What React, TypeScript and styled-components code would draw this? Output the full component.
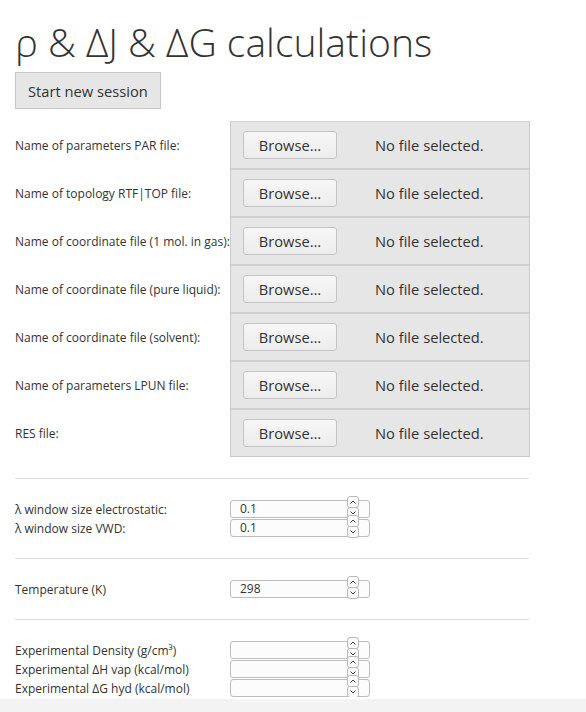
import React from "react";
import styled, { createGlobalStyle } from "styled-components";

const Global = createGlobalStyle`
  html, body { margin: 0; padding: 0; background: #fff; }
  body { font-family: "Open Sans", "Noto Sans", sans-serif; color: #333; }
  * { box-sizing: border-box; }
`;

const Page = styled.div`
  padding: 0 15px;
  width: 544px;
`;

const Title = styled.h1`
  margin: 0;
  padding-top: 17px;
  font-family: "Open Sans Light", "Open Sans", sans-serif;
  font-weight: 300;
  font-size: 39.1px;
  line-height: 50px;
  color: #333;
`;

const SessionButton = styled.button`
  display: block;
  margin-top: 5px;
  height: 37px;
  padding: 0 12px;
  background: #e6e6e6;
  border: 1px solid #c8c8c8;
  border-radius: 0;
  font-family: inherit;
  font-size: 14.7px;
  color: #333;
`;

const FileGrid = styled.div`
  margin-top: 12px;
  display: grid;
  grid-template-columns: 215px 300px;
`;

const FileLabel = styled.div`
  height: 48px;
  display: flex;
  align-items: center;
  font-size: 12px;
  white-space: nowrap;
`;

const FileCell = styled.div<{ $first?: boolean; $last?: boolean }>`
  height: 48px;
  background: #e6e6e6;
  border-left: 1px solid #cbcbcb;
  border-right: 1px solid #cbcbcb;
  border-top: 1px solid ${(p) => (p.$first ? "#d6d6d6" : "#cfcfcf")};
  border-bottom: 1px solid ${(p) => (p.$last ? "#c8c8c8" : "#cfcfcf")};
  display: flex;
  align-items: center;
  padding-left: 12px;
  font-size: 15px;
`;

const BrowseButton = styled.span`
  width: 94px;
  height: 28px;
  display: flex;
  align-items: center;
  justify-content: center;
  border: 1px solid #c4c4c4;
  border-radius: 3px;
  background: linear-gradient(#f7f7f7, #ececec);
  color: #333;
  font-size: 14.7px;
`;

const NoFile = styled.span`
  margin-left: 38px;
  color: #333;
  font-size: 14.7px;
`;

const Rule = styled.hr`
  border: 0;
  border-top: 1px solid #dcdcdc;
  margin: 21px 0 21px;
  width: 514px;
`;

const NumGrid = styled.div`
  display: grid;
  grid-template-columns: 215px 140px;
  row-gap: 1px;
`;

const NumLabel = styled.div`
  height: 18px;
  display: flex;
  align-items: center;
  font-size: 12px;
  white-space: nowrap;
`;

const InputWrap = styled.div`
  position: relative;
  width: 140px;
  height: 18px;
`;

const NumBox = styled.div`
  height: 18px;
  border: 1px solid #bdbdbd;
  border-radius: 3px;
  background: #fcfcfc;
  padding-left: 9px;
  font-size: 12px;
  line-height: 16px;
  color: #333;
`;

const Spinner = styled.div`
  position: absolute;
  right: 11px;
  top: -4px;
  width: 12px;
  display: flex;
  flex-direction: column;
`;

const SpinBtn = styled.div`
  height: 12px;
  border: 1px solid #b8b8b8;
  border-radius: 3px;
  background: #fafafa;
  display: flex;
  align-items: center;
  justify-content: center;
  margin-bottom: -1px;
`;

const Footer = styled.div`
  position: fixed;
  left: 0;
  right: 0;
  bottom: 0;
  height: 13px;
  background: #f3f3f3;
`;

const Chevron = ({ up }: { up?: boolean }) => (
  <svg width="6" height="4" viewBox="0 0 6 4">
    <polyline
      points={up ? "0.5,3.5 3,1 5.5,3.5" : "0.5,0.5 3,3 5.5,0.5"}
      fill="none"
      stroke="#444"
      strokeWidth="1"
    />
  </svg>
);

const NumInput = ({ value }: { value: string }) => (
  <InputWrap>
    <NumBox>{value}</NumBox>
    <Spinner>
      <SpinBtn>
        <Chevron up />
      </SpinBtn>
      <SpinBtn>
        <Chevron />
      </SpinBtn>
    </Spinner>
  </InputWrap>
);

const files = [
  "Name of parameters PAR file:",
  "Name of topology RTF|TOP file:",
  "Name of coordinate file (1 mol. in gas):",
  "Name of coordinate file (pure liquid):",
  "Name of coordinate file (solvent):",
  "Name of parameters LPUN file:",
  "RES file:",
];

const NumSection = ({ rows }: { rows: [string, string][] }) => (
  <NumGrid>
    {rows.map(([label, value]) => (
      <React.Fragment key={label}>
        <NumLabel>{label}</NumLabel>
        <NumInput value={value} />
      </React.Fragment>
    ))}
  </NumGrid>
);

export default function App() {
  return (
    <>
      <Global />
      <Page>
        <Title>ρ &amp; ΔJ &amp; ΔG calculations</Title>
        <SessionButton>Start new session</SessionButton>
        <FileGrid>
          {files.map((f, i) => (
            <React.Fragment key={f}>
              <FileLabel>{f}</FileLabel>
              <FileCell $first={i === 0} $last={i === files.length - 1}>
                <BrowseButton>Browse…</BrowseButton>
                <NoFile>No file selected.</NoFile>
              </FileCell>
            </React.Fragment>
          ))}
        </FileGrid>
        <Rule />
        <NumSection
          rows={[
            ["λ window size electrostatic:", "0.1"],
            ["λ window size VWD:", "0.1"],
          ]}
        />
        <Rule />
        <NumSection rows={[["Temperature (K)", "298"]]} />
        <Rule />
        <NumSection
          rows={[
            ["Experimental Density (g/cm³)", ""],
            ["Experimental ΔH vap (kcal/mol)", ""],
            ["Experimental ΔG hyd (kcal/mol)", ""],
          ]}
        />
      </Page>
      <Footer />
    </>
  );
}
